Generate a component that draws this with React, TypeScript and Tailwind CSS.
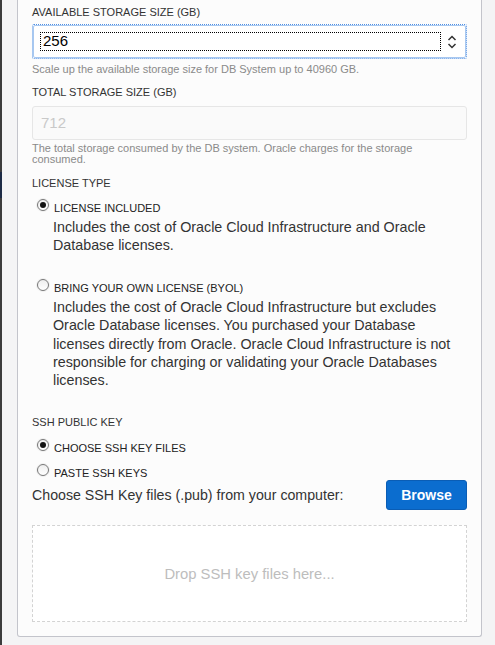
import React from "react";

function Radio({ checked }: { checked?: boolean }) {
  return (
    <span className="mt-[-2px] flex h-[12px] w-[12px] shrink-0 items-center justify-center rounded-full border border-[#777] bg-gradient-to-b from-[#eeeeee] to-[#ffffff] shadow-[0_0_0_1px_rgba(0,0,0,0.05)]">
      {checked && <span className="h-[6px] w-[6px] rounded-full bg-[#111]" />}
    </span>
  );
}

function RadioRow({ checked, label, className }: { checked?: boolean; label: string; className?: string }) {
  return (
    <div className={"flex h-[14px] items-start pl-[5px] " + (className ?? "")}>
      <Radio checked={checked} />
      <span className="ml-[5px] text-[11px] leading-[14px] text-[#222]">{label}</span>
    </div>
  );
}

export default function App() {
  return (
    <div
      className="flex h-[645px] w-[495px] overflow-hidden bg-[#f4f4f5]"
      style={{ fontFamily: '"Liberation Sans", Arial, sans-serif' }}
    >
      <div className="flex w-[2px] shrink-0 flex-col bg-[#3c3c3c]">
        <div className="h-[172px]" />
        <div className="h-[26px] bg-[#1d2b45]" />
      </div>
      <div className="w-[15px] shrink-0" />
      <div className="flex w-[465px] shrink-0 flex-col self-start rounded-b-[3px] border-x border-b border-[#c3c4cb] bg-[#fcfcfc] px-[14px] pb-[14px] pt-[5px]">
        <div className="text-[11px] leading-[14px] text-[#333]">AVAILABLE STORAGE SIZE (GB)</div>
        <div className="mt-[5px] flex h-[35px] items-center rounded-[2px] border border-dotted border-[#4f8fe3] bg-white">
          <div className="flex h-full w-full items-center rounded-[2px] border border-[#a8c8f0] pl-[6px] pr-[8px]">
            <div className="flex h-[19px] flex-1 items-center border border-dotted border-black pl-[2px] text-[15px] text-black">
              256
            </div>
            <svg width="10" height="14" viewBox="0 0 10 14" className="ml-[6px]">
              <path d="M1.5 5 L5 1.5 L8.5 5" fill="none" stroke="#333" strokeWidth="1.5" />
              <path d="M1.5 9 L5 12.5 L8.5 9" fill="none" stroke="#333" strokeWidth="1.5" />
            </svg>
          </div>
        </div>
        <div className="mt-[4px] text-[11px] leading-[13px] text-[#8a8a8a]">
          Scale up the available storage size for DB System up to 40960 GB.
        </div>
        <div className="mt-[9px] text-[11px] leading-[14px] text-[#333]">TOTAL STORAGE SIZE (GB)</div>
        <div className="mt-[7px] flex h-[34px] items-center rounded-[3px] border border-[#e6e6e6] bg-[#fafafa] pl-[8px] text-[15px] text-[#c9c9c9]">
          712
        </div>
        <div className="mt-[3px] text-[11px] leading-[11px] text-[#8a8a8a]">
          The total storage consumed by the DB system. Oracle charges for the storage
          <br />
          consumed.
        </div>
        <div className="mt-[11px] text-[11px] leading-[14px] text-[#333]">LICENSE TYPE</div>
        <RadioRow checked label="LICENSE INCLUDED" className="mt-[11px]" />
        <div className="mt-[3px] pl-[21px] text-[14.3px] leading-[18px] text-[#333]">
          Includes the cost of Oracle Cloud Infrastructure and Oracle
          <br />
          Database licenses.
        </div>
        <RadioRow label="BRING YOUR OWN LICENSE (BYOL)" className="mt-[27px]" />
        <div className="mt-[3px] pl-[21px] text-[14.3px] leading-[18.25px] text-[#333]">
          Includes the cost of Oracle Cloud Infrastructure but excludes
          <br />
          Oracle Database licenses. You purchased your Database
          <br />
          licenses directly from Oracle. Oracle Cloud Infrastructure is not
          <br />
          responsible for charging or validating your Oracle Databases
          <br />
          licenses.
        </div>
        <div className="mt-[26px] text-[11px] leading-[14px] text-[#333]">SSH PUBLIC KEY</div>
        <RadioRow checked label="CHOOSE SSH KEY FILES" className="mt-[12px]" />
        <RadioRow label="PASTE SSH KEYS" className="mt-[11px]" />
        <div className="flex h-[30px] items-center justify-between">
          <span className="text-[14.2px] text-[#333]">Choose SSH Key files (.pub) from your computer:</span>
          <button className="flex h-[30px] w-[81px] items-center justify-center rounded-[3px] border border-[#0a5db5] bg-[#0b6dcf] text-[14px] font-bold text-white">
            Browse
          </button>
        </div>
        <div className="mt-[15px] flex h-[97px] items-center justify-center border border-dashed border-[#d3d3d3] bg-white text-[14.8px] text-[#bdbdbd]">
          Drop SSH key files here...
        </div>
      </div>
    </div>
  );
}
